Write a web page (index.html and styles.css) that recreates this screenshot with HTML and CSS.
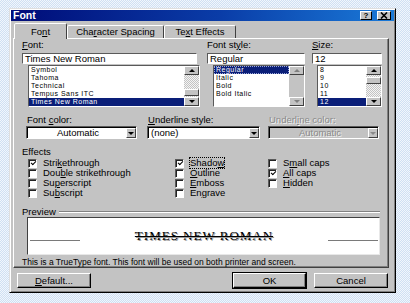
FILE: index.html
```html
<!DOCTYPE html>
<html lang="en">
<head>
    <meta charset="UTF-8">
    <title>Font</title>
    <link rel="stylesheet" href="styles.css">
</head>
<body>

<div class="dialog">
    <div class="titlebar">
        <span class="title">Font</span>
        <div class="title-buttons">
            <span class="tbtn help">?</span>
            <span class="tbtn close">
                <svg width="8" height="7" viewBox="0 0 8 7"><path d="M1 0.5 L7 6.5 M7 0.5 L1 6.5" stroke="#000" stroke-width="1.6"/></svg>
            </span>
        </div>
    </div>

    <div class="tabs">
        <div class="tab tab-font active">Fo<u>n</u>t</div>
        <div class="tab tab-spacing">Cha<u>r</u>acter Spacing</div>
        <div class="tab tab-effects">Te<u>x</u>t Effects</div>
    </div>

    <div class="panel">
        <div class="font-row">
            <div class="col col-font">
                <div class="label"><u>F</u>ont:</div>
                <div class="textbox">Times New Roman</div>
                <div class="listbox">
                    <ul class="items">
                        <li>Symbol</li>
                        <li>Tahoma</li>
                        <li>Technical</li>
                        <li>Tempus Sans ITC</li>
                        <li class="selected">Times New Roman</li>
                    </ul>
                    <div class="scrollbar">
                        <span class="sbtn up"></span>
                        <span class="track"><span class="thumb thumb-low"></span></span>
                        <span class="sbtn down"></span>
                    </div>
                </div>
            </div>

            <div class="col col-style">
                <div class="label">Font st<u>y</u>le:</div>
                <div class="textbox">Regular</div>
                <div class="listbox">
                    <ul class="items">
                        <li class="selected focused">Regular</li>
                        <li>Italic</li>
                        <li>Bold</li>
                        <li>Bold Italic</li>
                        <li></li>
                    </ul>
                    <div class="scrollbar disabled">
                        <span class="sbtn up"></span>
                        <span class="track"></span>
                        <span class="sbtn down"></span>
                    </div>
                </div>
            </div>

            <div class="col col-size">
                <div class="label"><u>S</u>ize:</div>
                <div class="textbox">12</div>
                <div class="listbox">
                    <ul class="items">
                        <li>8</li>
                        <li>9</li>
                        <li>10</li>
                        <li>11</li>
                        <li class="selected">12</li>
                    </ul>
                    <div class="scrollbar">
                        <span class="sbtn up"></span>
                        <span class="track"><span class="thumb thumb-high"></span></span>
                        <span class="sbtn down"></span>
                    </div>
                </div>
            </div>
        </div>

        <div class="combo-row">
            <div class="col combo-color">
                <div class="label">Font <u>c</u>olor:</div>
                <div class="combo">
                    <span class="combo-text center">Automatic</span>
                    <span class="combo-btn"></span>
                </div>
            </div>
            <div class="col combo-underline">
                <div class="label"><u>U</u>nderline style:</div>
                <div class="combo">
                    <span class="combo-text">(none)</span>
                    <span class="combo-btn"></span>
                </div>
            </div>
            <div class="col combo-ucolor disabled">
                <div class="label">Underl<u>i</u>ne color:</div>
                <div class="combo">
                    <span class="combo-text center">Automatic</span>
                    <span class="combo-btn"></span>
                </div>
            </div>
        </div>

        <div class="label effects-label">Effects</div>
        <div class="effects">
            <div class="check"><span class="box on"></span><span>Stri<u>k</u>ethrough</span></div>
            <div class="check"><span class="box"></span><span>Dou<u>b</u>le strikethrough</span></div>
            <div class="check"><span class="box"></span><span>Su<u>p</u>erscript</span></div>
            <div class="check"><span class="box"></span><span>Su<u>b</u>script</span></div>
            <div class="check"><span class="box on"></span><span class="focus">Shado<u>w</u></span></div>
            <div class="check"><span class="box"></span><span><u>O</u>utline</span></div>
            <div class="check"><span class="box"></span><span><u>E</u>mboss</span></div>
            <div class="check"><span class="box"></span><span>En<u>g</u>rave</span></div>
            <div class="check"><span class="box"></span><span>S<u>m</u>all caps</span></div>
            <div class="check"><span class="box on"></span><span><u>A</u>ll caps</span></div>
            <div class="check"><span class="box"></span><span><u>H</u>idden</span></div>
        </div>

        <div class="preview-head">
            <span class="label">Preview</span>
            <span class="etch"></span>
        </div>
        <div class="preview">
            <span class="rule"></span>
            <span class="sample">TIMES NEW ROMAN</span>
            <span class="rule"></span>
        </div>
        <p class="note">This is a TrueType font. This font will be used on both printer and screen.</p>
    </div>

    <div class="buttons">
        <button class="btn btn-default"><u>D</u>efault...</button>
        <button class="btn btn-ok">OK</button>
        <button class="btn btn-cancel">Cancel</button>
    </div>
</div>

</body>
</html>
```

FILE: styles.css
```css
body {
    margin: 0;
    font-family: 'Liberation Sans', Arial, sans-serif;
    font-size: 9.5px;
    color: #000;
    background: repeating-conic-gradient(#cfe0f3 0 25%, #f1f6fc 0 50%) 0 0 / 2px 2px;
}

u {
    text-decoration-thickness: 1px;
    text-underline-offset: 1px;
}

.dialog {
    margin: 8px 0 0 9px;
    width: 387px;
    height: 285px;
    box-sizing: border-box;
    padding: 1px;
    background-color: #c3c3c3;
    border: 1px solid;
    border-color: #dfdfdf #000 #000 #dfdfdf;
    box-shadow: inset 1px 1px #fff, inset -1px -1px #808080;
    display: flex;
    flex-direction: column;
}

/* title bar */
.titlebar {
    height: 11px;
    display: flex;
    align-items: center;
    justify-content: space-between;
    padding: 0 3px 0 2px;
    background: linear-gradient(90deg, #000c78 0%, #0a3da8 55%, #1a7ad8 100%);
}

.title {
    color: #fff;
    font-weight: bold;
    font-size: 10.5px;
    line-height: 11px;
}

.title-buttons {
    display: flex;
    gap: 5px;
}

.tbtn {
    width: 12px;
    height: 9px;
    box-sizing: border-box;
    background-color: #c3c3c3;
    border: 1px solid;
    border-color: #fff #000 #000 #fff;
    display: flex;
    align-items: center;
    justify-content: center;
    font-weight: bold;
    font-size: 8px;
    line-height: 7px;
}

.tbtn.close {
    width: 14px;
}

/* tabs */
.tabs {
    height: 15px;
    margin-top: 2px;
    padding-left: 3px;
    display: flex;
    align-items: flex-end;
    position: relative;
    z-index: 1;
}

.tab {
    height: 13px;
    box-sizing: border-box;
    line-height: 11px;
    text-align: center;
    border: 1px solid;
    border-bottom: none;
    border-color: #fff #404040 transparent #fff;
    border-radius: 2px 2px 0 0;
    background-color: #c3c3c3;
}

.tab.active {
    height: 16px;
    margin-bottom: -1px;
    line-height: 15px;
}

.tab-font { width: 53px; }
.tab-spacing { width: 97px; }
.tab-effects { width: 72px; }

/* panel */
.panel {
    margin-left: 2px;
    width: 376px;
    height: 230px;
    box-sizing: border-box;
    padding: 1px 0 0 8px;
    border: 1px solid;
    border-color: #fff #404040 #404040 #fff;
    box-shadow: inset -1px -1px #808080;
}

.label {
    line-height: 10px;
    white-space: nowrap;
}

.font-row {
    display: flex;
    gap: 7px;
}

.font-row .label {
    margin-bottom: 3px;
}

.textbox {
    height: 11px;
    box-sizing: border-box;
    background-color: #fff;
    border: 1px solid;
    border-color: #5a5a5a #fff #fff #5a5a5a;
    padding-left: 2px;
    line-height: 9px;
    white-space: nowrap;
}

.listbox {
    margin-top: 1px;
    height: 42px;
    box-sizing: border-box;
    display: flex;
    background-color: #fff;
    border: 1px solid;
    border-color: #5a5a5a #fff #fff #5a5a5a;
}

.items {
    flex: 1;
    margin: 0;
    padding: 0;
    list-style: none;
}

.items li {
    height: 8px;
    font-size: 7px;
    letter-spacing: 0.5px;
    line-height: 8px;
    padding-left: 2px;
    white-space: nowrap;
}

.items li.selected {
    background-color: #0a1e78;
    color: #fff;
}

.items li.focused {
    outline: 1px dotted #9aa6d8;
    outline-offset: -1px;
}

.col-font { width: 178px; }
.col-font .textbox { width: 175px; }
.col-font .listbox { width: 172px; margin-left: 6px; }

.col-style { width: 98px; }
.col-style .listbox { margin-left: 6px; }

.col-size { width: 70px; }
.col-size .listbox { margin-left: 5px; }

/* scrollbars */
.scrollbar {
    width: 15px;
    display: flex;
    flex-direction: column;
}

.sbtn {
    height: 9px;
    box-sizing: border-box;
    background-color: #c3c3c3;
    border: 1px solid;
    border-color: #fff #404040 #404040 #fff;
    display: flex;
    align-items: center;
    justify-content: center;
}

.sbtn::before {
    content: "";
    border-left: 3px solid transparent;
    border-right: 3px solid transparent;
}

.sbtn.up::before {
    border-bottom: 3px solid #000;
}

.sbtn.down::before {
    border-top: 3px solid #000;
}

.track {
    flex: 1;
    position: relative;
    background: repeating-conic-gradient(#c3c3c3 0 25%, #f4f4f4 0 50%) 0 0 / 2px 2px;
}

.thumb {
    position: absolute;
    left: 0;
    right: 0;
    height: 7px;
    box-sizing: border-box;
    background-color: #c3c3c3;
    border: 1px solid;
    border-color: #fff #404040 #404040 #fff;
}

.thumb-low { top: 14px; }
.thumb-high { top: 2px; }

.scrollbar.disabled .track {
    background: #c3c3c3;
}

.scrollbar.disabled .sbtn.up::before {
    border-bottom-color: #808080;
}

.scrollbar.disabled .sbtn.down::before {
    border-top-color: #808080;
}

/* combos */
.combo-row {
    margin-top: 8px;
    padding-left: 4px;
    display: flex;
}

.combo-row .label {
    margin-bottom: 1px;
    padding-left: 1px;
}

.combo-color { width: 111px; }
.combo-underline { width: 113px; margin-left: 10px; }
.combo-ucolor { width: 111px; margin-left: 8px; }

.combo {
    height: 13px;
    box-sizing: border-box;
    display: flex;
    background-color: #fff;
    border: 1px solid;
    border-color: #5a5a5a #fff #fff #5a5a5a;
    box-shadow: inset 1px 1px #000;
}

.combo-text {
    flex: 1;
    padding-left: 3px;
    line-height: 11px;
    white-space: nowrap;
}

.combo-text.center {
    text-align: center;
}

.combo-btn {
    width: 10px;
    box-sizing: border-box;
    margin: 1px 0 0;
    background-color: #c3c3c3;
    border: 1px solid;
    border-color: #fff #404040 #404040 #fff;
    display: flex;
    align-items: center;
    justify-content: center;
}

.combo-btn::before {
    content: "";
    border-left: 3px solid transparent;
    border-right: 3px solid transparent;
    border-top: 3px solid #000;
}

.disabled .label,
.disabled .combo-text {
    color: #8a8a8a;
    text-shadow: 1px 1px #f2f2f2;
}

.disabled .combo {
    background-color: #c3c3c3;
}

.disabled .combo-btn::before {
    border-top-color: #8a8a8a;
}

/* effects */
.effects-label {
    margin-top: 8px;
    margin-bottom: 1px;
}

.effects {
    padding-left: 6px;
    display: grid;
    grid-template-columns: 147px 93px auto;
    grid-template-rows: repeat(4, 10px);
    grid-auto-flow: column;
}

.check {
    display: flex;
    align-items: center;
    gap: 6px;
    line-height: 10px;
    white-space: nowrap;
}

.box {
    width: 9px;
    height: 9px;
    box-sizing: border-box;
    background-color: #fff;
    border: 1px solid;
    border-color: #5a5a5a #fff #fff #5a5a5a;
    box-shadow: inset 1px 1px #222;
    display: flex;
    align-items: center;
    justify-content: center;
}

.box.on::before {
    content: "";
    width: 4px;
    height: 2px;
    margin: -2px 0 0 1px;
    border-left: 1.5px solid #000;
    border-bottom: 1.5px solid #000;
    transform: rotate(-45deg);
}

.focus {
    outline: 1px dotted #000;
    outline-offset: 0;
}

/* preview */
.preview-head {
    margin-top: 9px;
    width: 358px;
    display: flex;
    align-items: center;
    gap: 3px;
}

.etch {
    flex: 1;
    height: 0;
    border-top: 1px solid #808080;
    border-bottom: 1px solid #fff;
}

.preview {
    margin-left: 5px;
    width: 353px;
    height: 38px;
    box-sizing: border-box;
    padding: 0 1px 0 2px;
    display: flex;
    align-items: center;
    background-color: #fff;
    border: 1px solid;
    border-color: #404040 #e8e8e8 #e8e8e8 #404040;
}

.rule {
    width: 50px;
    height: 1px;
    margin-top: 8px;
    background-color: #7a7a7a;
}

.sample {
    flex: 1;
    text-align: center;
    font-family: 'Liberation Serif', 'Times New Roman', serif;
    font-size: 13px;
    letter-spacing: 1px;
    text-decoration: line-through;
    text-decoration-thickness: 1px;
    text-shadow: 1px 1px #9a9a9a;
    white-space: nowrap;
}

.note {
    margin: 2px 0 0;
    font-size: 8.5px;
    line-height: 10px;
    white-space: nowrap;
}

/* buttons */
.buttons {
    margin-top: 5px;
    padding: 0 6px;
    display: flex;
    gap: 8px;
}

.btn {
    height: 15px;
    padding: 0;
    box-sizing: border-box;
    font-family: inherit;
    font-size: 9.5px;
    color: #000;
    background-color: #c3c3c3;
    border: 1px solid;
    border-color: #fff #000 #000 #fff;
    box-shadow: inset -1px -1px #808080;
}

.btn-default { width: 74px; }

.btn-ok {
    width: 73px;
    margin-left: auto;
    outline: 1px solid #000;
    outline-offset: 0;
}

.btn-cancel { width: 74px; }
```
